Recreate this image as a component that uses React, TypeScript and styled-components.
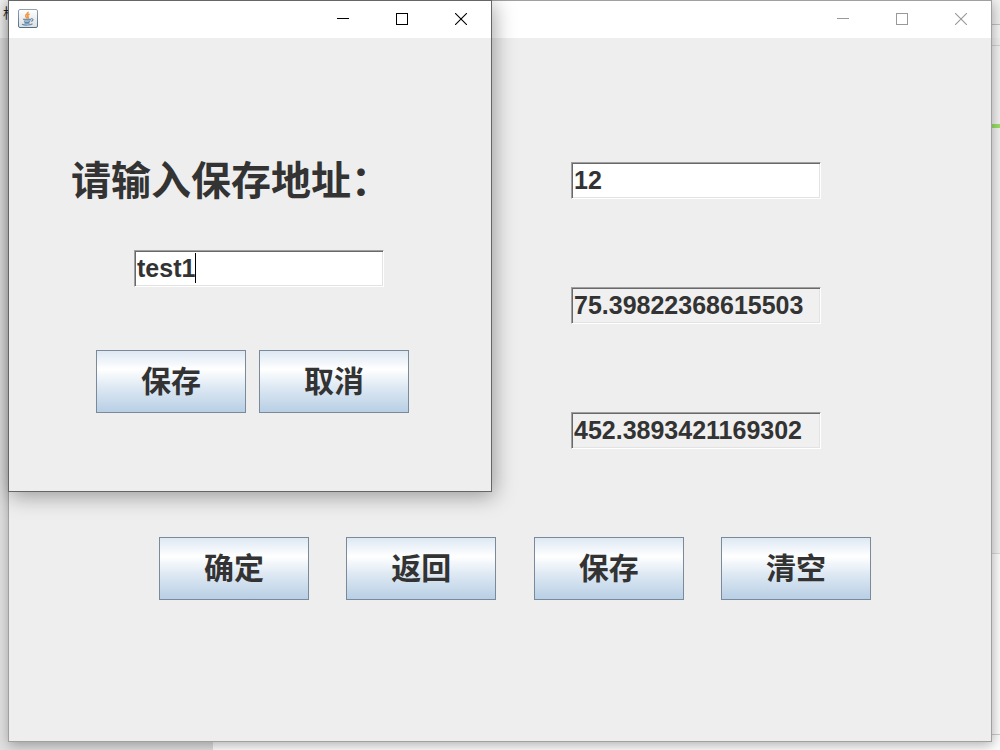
import React, { useState } from "react";
import styled, { createGlobalStyle } from "styled-components";

const GlobalStyle = createGlobalStyle`
  *, *::before, *::after { box-sizing: border-box; }
  body {
    margin: 0;
    font-family: "Liberation Sans", "Noto Sans CJK SC", sans-serif;
    color: #333333;
  }
`;

const Desktop = styled.main`
  position: relative;
  min-height: 100vh;
  padding: 0 8px 8px;
  overflow: hidden;
`;

const Backdrop = styled.div`
  position: absolute;
  inset: 0;
  display: flex;
`;

const LeftPane = styled.div`
  width: 213px;
  background: #e0e0e0;
`;

const LeftHeader = styled.div`
  height: 38px;
  padding: 4px 0 0 3px;
  background: #f2f2f2;
  color: #222222;
  font-size: 14px;
  line-height: 18px;
`;

const RightPane = styled.div`
  flex: 1;
  display: flex;
  flex-direction: column;
  background: #ffffff;
`;

const Band = styled.div<{ $height: number; $color: string; $line?: string }>`
  height: ${(p) => p.$height}px;
  background: ${(p) => p.$color};
  border-bottom: ${(p) => (p.$line ? `1px solid ${p.$line}` : "0")};
`;

const Filler = styled.div`
  flex: 1;
  background: #ffffff;
  border-bottom: 1px solid #cfcfcf;
`;

const Frame = styled.section<{ $active?: boolean }>`
  position: relative;
  display: flex;
  flex-direction: column;
  background: #eeeeee;
  border: 1px solid ${(p) => (p.$active ? "#666666" : "#a0a0a0")};
  box-shadow: ${(p) =>
    p.$active ? "2px 4px 20px rgba(0, 0, 0, 0.36)" : "1px 3px 12px rgba(0, 0, 0, 0.32)"};
`;

const MainFrame = styled(Frame)`
  min-height: calc(100vh - 8px);
`;

const DialogFrame = styled(Frame)`
  position: absolute;
  top: 0;
  left: 8px;
  width: 484px;
  padding-bottom: 78px;
`;

const Bar = styled.header<{ $active?: boolean }>`
  display: flex;
  align-items: center;
  gap: 1px;
  height: 37px;
  padding: 0 1px 2px 9px;
  background: #ffffff;
  color: ${(p) => (p.$active ? "#000000" : "#999999")};
`;

const Spacer = styled.div`
  flex: 1;
`;

const BarButton = styled.button`
  display: flex;
  align-items: center;
  justify-content: center;
  width: 58px;
  height: 34px;
  padding: 0;
  border: 0;
  background: transparent;
  color: inherit;
`;

const MainBody = styled.form`
  display: flex;
  flex-direction: column;
  gap: 88px;
  padding: 124px 120px 0 150px;
`;

const Fields = styled.div`
  display: flex;
  flex-direction: column;
  align-items: flex-end;
  gap: 88px;
  padding-right: 50px;
`;

const Field = styled.input`
  display: block;
  width: 250px;
  height: 37px;
  padding: 0 1px 0 2px;
  border: 1px solid;
  border-color: #a0a0a0 #ffffff #ffffff #a0a0a0;
  border-radius: 0;
  outline: 0;
  box-shadow: inset 1px 1px 0 #696969, inset -1px -1px 0 #e3e3e3;
  background: ${(p) => (p.readOnly ? "#f0f0f0" : "#ffffff")};
  color: #333333;
  font: bold 25px/30px "Liberation Sans", sans-serif;
`;

const Actions = styled.div`
  display: flex;
  justify-content: space-between;
`;

const ActionButton = styled.button`
  width: 150px;
  height: 63px;
  padding: 0 0 5px;
  border: 1px solid #7a8a99;
  border-radius: 0;
  background: linear-gradient(#dde8f3, #ffffff 30%, #dde8f3 60%, #b8cfe5);
  color: #333333;
  font: bold 30px/40px STXingkai, "Noto Sans CJK SC", sans-serif;
`;

const DialogBody = styled.form`
  padding: 120px 62px 0;
`;

const Prompt = styled.label`
  display: block;
  font: bold 40px/40px STXingkai, "Noto Sans CJK SC", sans-serif;
  white-space: nowrap;
`;

const PathBox = styled.div`
  position: relative;
  width: 250px;
  margin: 52px 0 63px 63px;
`;

const PathField = styled(Field)`
  caret-color: transparent;
`;

const Caret = styled.span`
  position: absolute;
  top: 3px;
  left: 61px;
  width: 1px;
  height: 30px;
  background: #000000;
`;

const DialogActions = styled.div`
  display: flex;
  gap: 13px;
  padding-left: 25px;
`;

function JavaIcon() {
  return (
    <svg width="20" height="20" viewBox="0 0 20 20" fill="none" aria-hidden="true">
      <defs>
        <linearGradient id="tile" x1="0" y1="0" x2="0" y2="1">
          <stop offset="0" stopColor="#ffffff" />
          <stop offset="1" stopColor="#dedede" />
        </linearGradient>
        <linearGradient id="edge" x1="0" y1="0" x2="0" y2="1">
          <stop offset="0" stopColor="#8fa3b4" />
          <stop offset="1" stopColor="#4f7089" />
        </linearGradient>
      </defs>
      <rect x="0.5" y="0.5" width="19" height="18" rx="1.5" fill="url(#tile)" stroke="url(#edge)" />
      <path d="M10 2.800c.8 1.800-3 2.800-2.300 4.500.3.900 1 1.300 1.500 2M11.500 5c-2 1-2.300 1.800-1.300 3 .5.700 0 1.300-.5 1.700" stroke="#f0963f" strokeWidth="1.500" />
      <path d="M5 10h8v1.500c-1 1.700-6 1.700-7 0z" fill="#9ab3c9" />
      <path d="M5 10.200h8M6 12.500c1.500 1 4.500 1 6 0M13 9.800c2.600-.6 2.600 2 0 2.500M4 15.200c2.500 1.300 8 1.200 10.500-.5M6.500 14.200h5" stroke="#5f86aa" strokeWidth="1.100" />
    </svg>
  );
}

function TitleBar({ active, name }: { active?: boolean; name: string }) {
  return (
    <Bar $active={active}>
      {active && <JavaIcon />}
      <Spacer />
      <BarButton type="button" aria-label={`最小化${name}`}>
        <svg width="12" height="12" viewBox="0 0 12 12" aria-hidden="true">
          <path d="M0 5h12v1H0z" fill="currentColor" />
        </svg>
      </BarButton>
      <BarButton type="button" aria-label={`最大化${name}`}>
        <svg width="12" height="12" viewBox="0 0 12 12" fill="none" aria-hidden="true">
          <rect x="0.5" y="0.5" width="11" height="11" stroke="currentColor" />
        </svg>
      </BarButton>
      <BarButton type="button" aria-label={`关闭${name}`}>
        <svg width="12" height="12" viewBox="0 0 12 12" fill="none" aria-hidden="true">
          <path d="M0 0l12 12M12 0L0 12" stroke="currentColor" strokeWidth="1.100" />
        </svg>
      </BarButton>
    </Bar>
  );
}

export default function App() {
  const [radius, setRadius] = useState("12");
  const [path, setPath] = useState("test1");

  return (
    <>
      <GlobalStyle />
      <Desktop>
        <Backdrop aria-hidden="true">
          <LeftPane>
            <LeftHeader>格</LeftHeader>
          </LeftPane>
          <RightPane>
            <Band $height={25} $color="#f2f2f2" $line="#c4c4c4" />
            <Band $height={13} $color="#f7f7f7" />
            <Band $height={8} $color="#f2f2f2" $line="#d4d4d4" />
            <Band $height={78} $color="#f4f4f4" />
            <Band $height={4} $color="#9be366" />
            <Band $height={426} $color="#f4f4f4" $line="#dddddd" />
            <Filler />
            <Band $height={15} $color="#ffffff" />
          </RightPane>
        </Backdrop>

        <MainFrame aria-label="计算">
          <TitleBar name="计算" />
          <MainBody onSubmit={(e: React.FormEvent) => e.preventDefault()}>
            <Fields>
              <Field aria-label="半径" value={radius} onChange={(e) => setRadius(e.target.value)} />
              <Field aria-label="周长" value="75.39822368615503" readOnly />
              <Field aria-label="面积" value="452.3893421169302" readOnly />
            </Fields>
            <Actions>
              <ActionButton type="submit">确定</ActionButton>
              <ActionButton type="button">返回</ActionButton>
              <ActionButton type="button">保存</ActionButton>
              <ActionButton type="button">清空</ActionButton>
            </Actions>
          </MainBody>
        </MainFrame>

        <DialogFrame $active role="dialog" aria-label="保存">
          <TitleBar active name="保存" />
          <DialogBody onSubmit={(e: React.FormEvent) => e.preventDefault()}>
            <Prompt htmlFor="path">请输入保存地址：</Prompt>
            <PathBox>
              <PathField id="path" value={path} onChange={(e) => setPath(e.target.value)} />
              <Caret />
            </PathBox>
            <DialogActions>
              <ActionButton type="submit">保存</ActionButton>
              <ActionButton type="button">取消</ActionButton>
            </DialogActions>
          </DialogBody>
        </DialogFrame>
      </Desktop>
    </>
  );
}
